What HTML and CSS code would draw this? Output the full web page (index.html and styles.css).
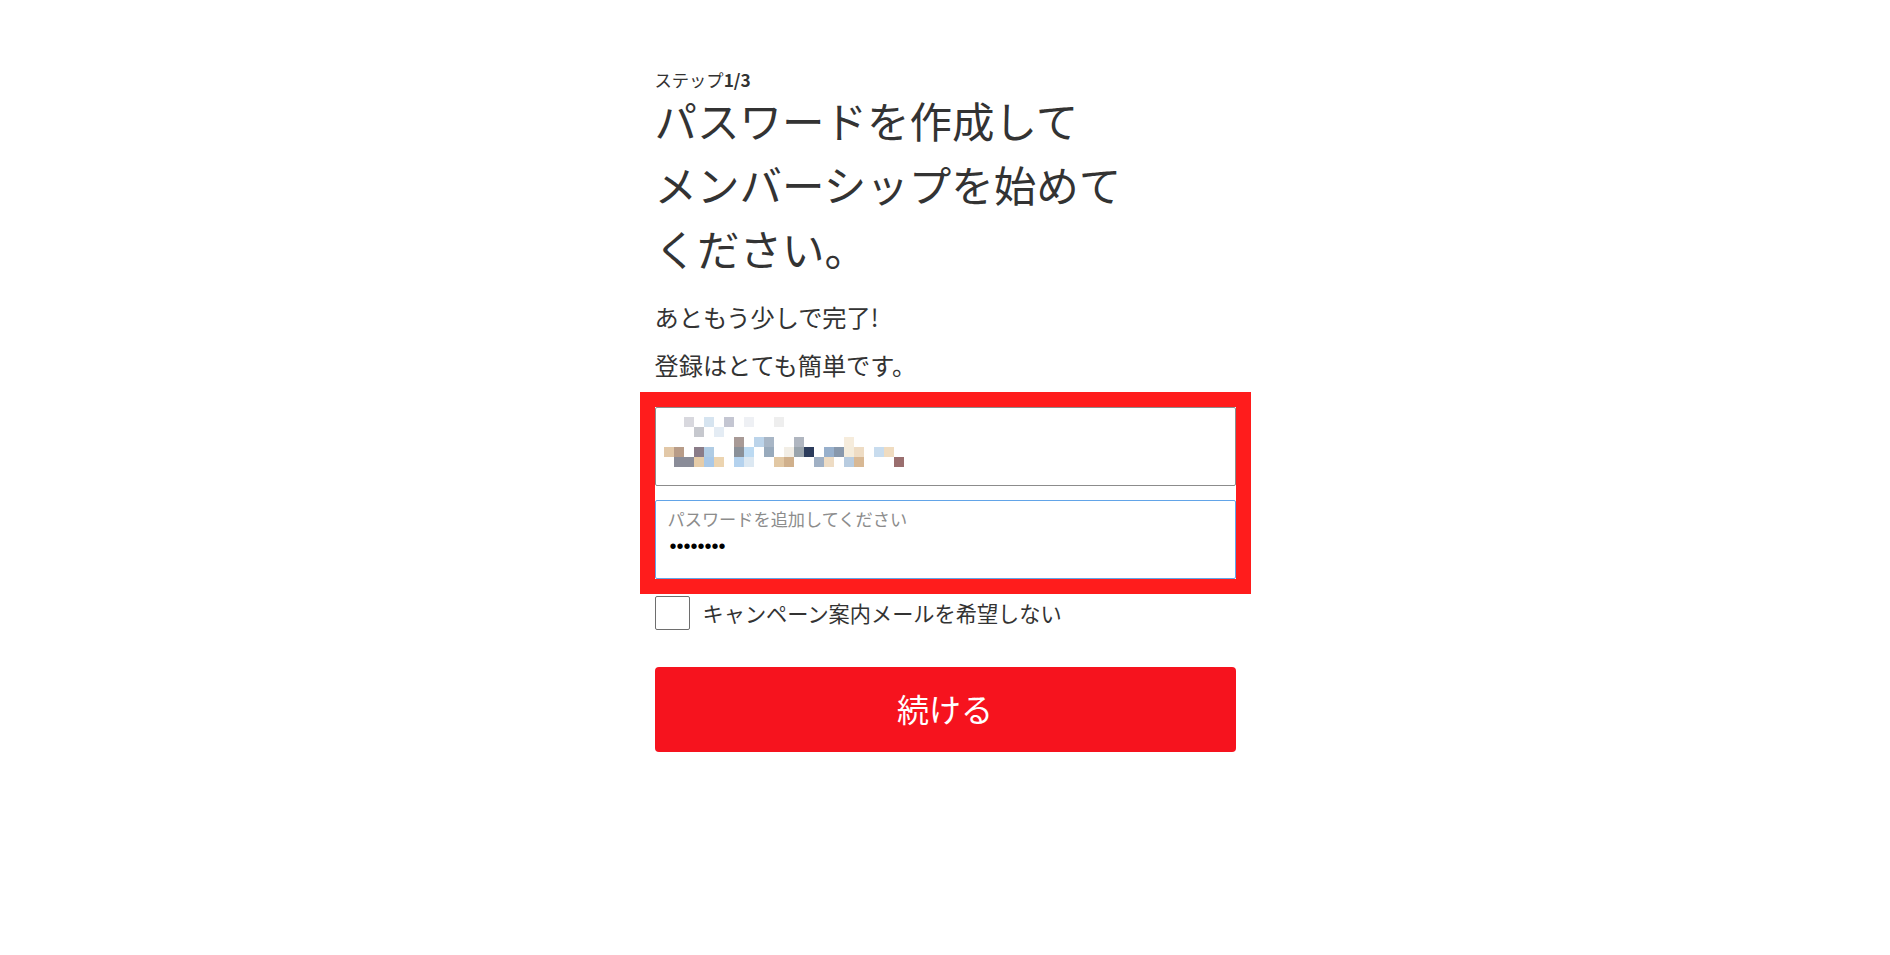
FILE: index.html
```html
<!DOCTYPE html>
<html lang="ja">
<head>
    <meta charset="utf-8">
    <meta name="viewport" content="width=device-width, initial-scale=1">
    <title>パスワードを作成</title>
    <link rel="stylesheet" href="styles.css">
</head>
<body>
    <div class="page">
        <form class="regform" onsubmit="return false;">
            <div class="step">ステップ<b>1/3</b></div>
            <h1 class="title">パスワードを作成して<br>メンバーシップを始めて<br>ください。</h1>

            <div class="intro">
                <p>あともう少しで完了!</p>
                <p>登録はとても簡単です。</p>
            </div>

            <div class="fields">
                <div class="field">
                    <!-- メールアドレスはモザイク処理 -->
                    <div class="mosaic" id="mosaic"></div>
                </div>
                <div class="field field-focus">
                    <div class="field-label">パスワードを追加してください</div>
                    <div class="field-value">••••••••</div>
                </div>
            </div>

            <label class="check">
                <span class="check-box"></span>
                <span class="check-text">キャンペーン案内メールを希望しない</span>
            </label>

            <button class="btn" type="submit">続ける</button>
        </form>
    </div>

    <script src="script.js"></script>
</body>
</html>
```

FILE: styles.css
```css
body {
    margin: 0;
    padding: 0;
    background-color: #ffffff;
    color: #333333;
    font-family: "Noto Sans CJK JP", "Noto Sans", sans-serif;
}

.page {
    width: 581px;
    margin: 0 auto;
}

.regform {
    padding-top: 72px;
}

.step {
    font-size: 17.3px;
    line-height: 16px;
    color: #333333;
}

.step b {
    font-weight: 700;
}

.title {
    margin: 0;
    font-size: 42.5px;
    line-height: 64px;
    font-weight: 400;
    color: #333333;
}

.intro {
    margin-top: 13px;
}

.intro p {
    margin: 0;
    font-size: 24.2px;
    line-height: 48px;
}

.fields {
    margin-top: 18px;
    display: flex;
    flex-direction: column;
    gap: 14px;
    outline: 15px solid #ff1c1c;
}

.field {
    box-sizing: border-box;
    height: 79px;
    border: 1px solid #8c8c8c;
    border-radius: 2px;
    padding: 9px 8px;
    background-color: #ffffff;
}

.field-focus {
    border-color: #62a4e8;
    padding: 8px 12px;
}

.mosaic {
    display: grid;
    grid-template-columns: repeat(24, 10px);
    grid-template-rows: repeat(5, 10px);
}

.field-label {
    font-size: 17.2px;
    line-height: 20px;
    color: #8c8c8c;
}

.field-value {
    margin-top: 5px;
    padding-left: 2px;
    font-family: "Liberation Sans", sans-serif;
    font-size: 20px;
    line-height: 24px;
    color: #000000;
}

.check {
    margin-top: 17px;
    display: flex;
    align-items: center;
    gap: 13px;
    cursor: pointer;
}

.check-box {
    box-sizing: border-box;
    width: 35px;
    height: 34px;
    border: 1px solid #6e6e6e;
    border-radius: 2px;
    background-color: #ffffff;
}

.check-text {
    font-size: 21.2px;
    line-height: 28px;
    color: #333333;
}

.btn {
    display: block;
    width: 100%;
    height: 85px;
    margin-top: 37px;
    padding: 0 0 4px;
    border: none;
    border-radius: 4px;
    background-color: #f6131e;
    color: #ffffff;
    font-family: "Noto Sans CJK JP", "Noto Sans", sans-serif;
    font-size: 32px;
    cursor: pointer;
}
```

FILE: script.js
```js
// モザイクのセル: [行, 列, 色]
var cells = [
    [0, 2, '#d8d8de'], [0, 4, '#d6e4f0'], [0, 6, '#c4c6d2'], [0, 8, '#eef0f4'], [0, 11, '#eeeeee'],
    [1, 3, '#c6c8ce'], [1, 5, '#e4ecf4'],
    [2, 7, '#a89a96'], [2, 9, '#bcd4ea'], [2, 10, '#a8b6c6'], [2, 13, '#b0b6c0'], [2, 18, '#f6ecdc'],
    [3, 0, '#e2c8a8'], [3, 1, '#b89c88'], [3, 3, '#8a7c88'], [3, 4, '#b0cce4'], [3, 7, '#8a9098'],
    [3, 8, '#bcdaf2'], [3, 10, '#98aabc'], [3, 12, '#f2eee6'], [3, 13, '#9aa4ac'], [3, 14, '#2c3c5c'],
    [3, 16, '#98b0cc'], [3, 17, '#8898ac'], [3, 18, '#f4ecdc'], [3, 19, '#eedcc4'], [3, 21, '#c8dcee'],
    [3, 22, '#f0dcc0'],
    [4, 1, '#8a8c98'], [4, 2, '#8a8c98'], [4, 3, '#e6cca8'], [4, 4, '#a8c8e8'], [4, 5, '#ecd4b0'],
    [4, 7, '#b4d2ee'], [4, 8, '#dce8f2'], [4, 11, '#e2c8a4'], [4, 12, '#d0b08c'], [4, 15, '#a0b0c4'],
    [4, 16, '#eedcc4'], [4, 18, '#b8cce0'], [4, 19, '#d8b894'], [4, 23, '#9a6e6e']
];

var mosaic = document.getElementById('mosaic');
cells.forEach(function (c) {
    var el = document.createElement('span');
    el.style.gridRow = c[0] + 1;
    el.style.gridColumn = c[1] + 1;
    el.style.backgroundColor = c[2];
    mosaic.appendChild(el);
});
```
